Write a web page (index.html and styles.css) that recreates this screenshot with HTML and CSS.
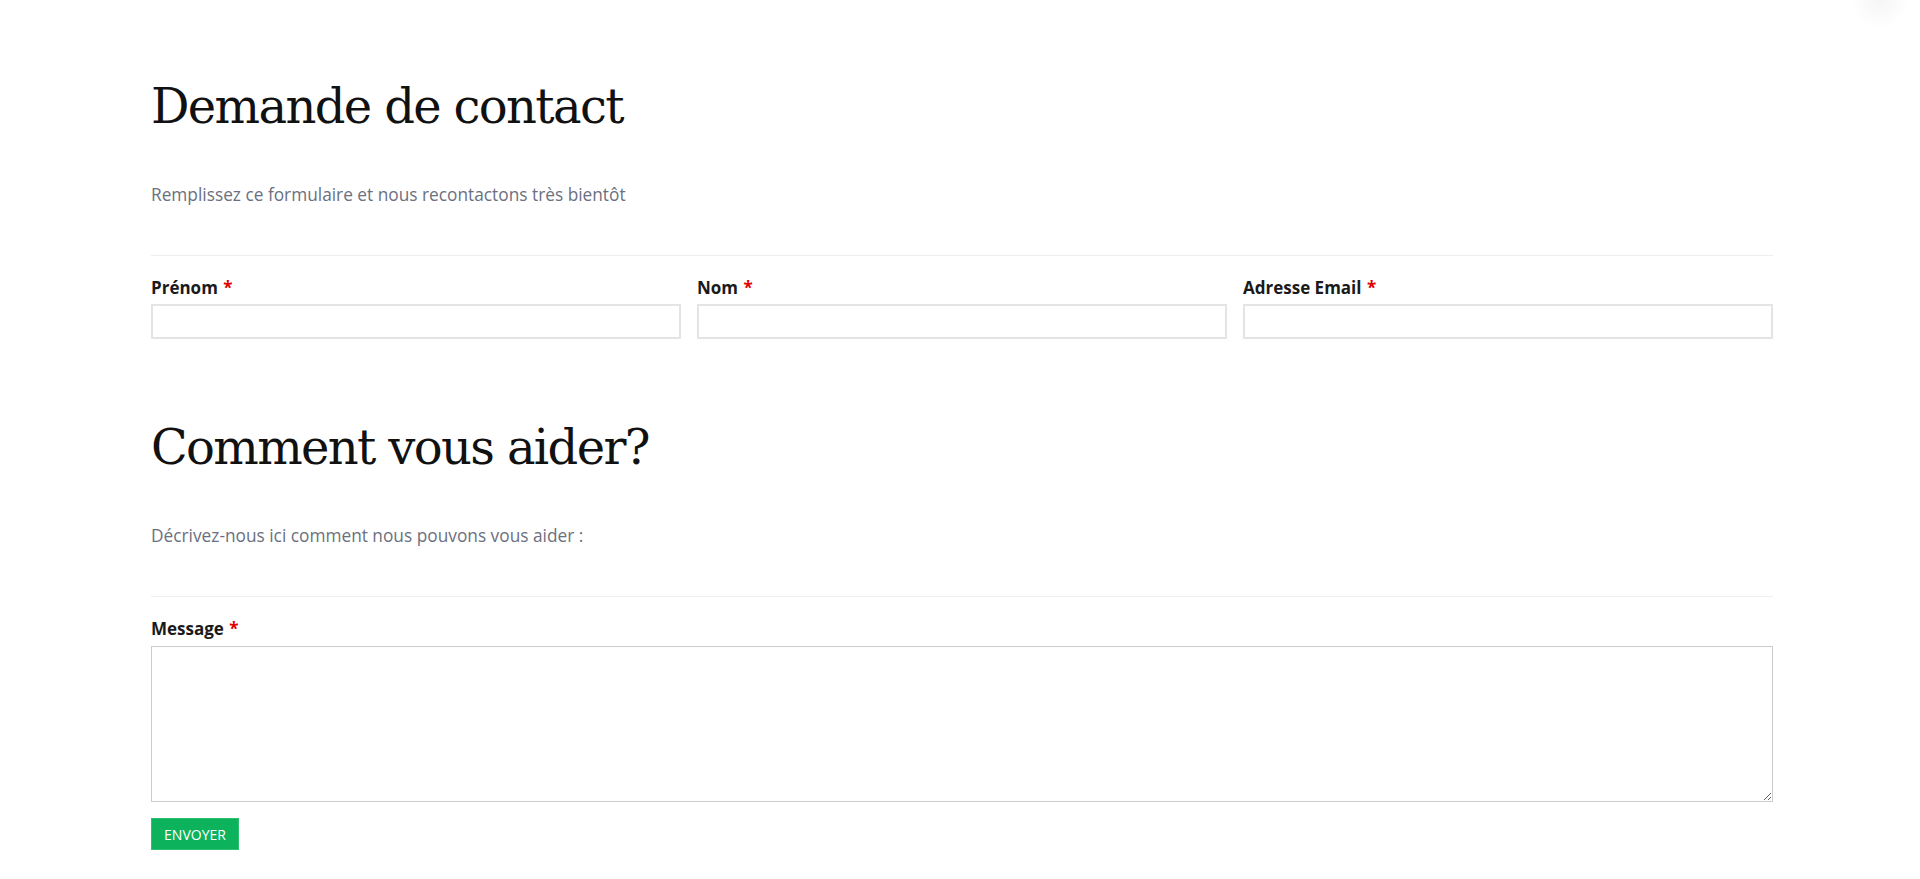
FILE: index.html
```html
<!DOCTYPE html>
<html lang="fr">
<head>
<meta charset="utf-8">
<title>Demande de contact</title>
<link rel="stylesheet" href="styles.css">
</head>
<body>
<div class="corner-glow"></div>
<form class="page">
  <section class="section">
    <h1 class="title">Demande de contact</h1>
    <p class="intro">Remplissez ce formulaire et nous recontactons très bientôt</p>
    <hr class="divider">
    <div class="row three">
      <div class="field">
        <label class="label">Prénom <span class="req">*</span></label>
        <input class="input" type="text">
      </div>
      <div class="field">
        <label class="label">Nom <span class="req">*</span></label>
        <input class="input" type="text">
      </div>
      <div class="field">
        <label class="label">Adresse Email <span class="req">*</span></label>
        <input class="input" type="email">
      </div>
    </div>
  </section>
  <section class="section">
    <h1 class="title">Comment vous aider?</h1>
    <p class="intro">Décrivez-nous ici comment nous pouvons vous aider :</p>
    <hr class="divider">
    <div class="field">
      <label class="label">Message <span class="req">*</span></label>
      <textarea class="textarea"></textarea>
    </div>
    <button class="submit" type="button">ENVOYER</button>
  </section>
</form>
</body>
</html>
```

FILE: styles.css
```css
* { box-sizing: border-box; }
html, body { margin: 0; padding: 0; background: #fff; }
body { font-family: "Open Sans", "Noto Sans", sans-serif; color: #1a1a1a; }

.corner-glow {
  position: absolute;
  top: -30px;
  right: 10px;
  width: 60px;
  height: 60px;
  border-radius: 50%;
  background: radial-gradient(circle, rgba(0,0,0,0.035) 0%, rgba(0,0,0,0) 70%);
}

.page {
  width: 1773px;
  padding-left: 151px;
}

.section { padding-top: 77px; }
.section + .section { padding-top: 79px; }

.title {
  margin: 0;
  font-family: "DejaVu Serif", "Liberation Serif", serif;
  font-weight: normal;
  font-size: 48px;
  line-height: 58px;
  color: #111;
  letter-spacing: -1.65px;
}

.intro {
  margin: 48px 0 0;
  font-size: 17.3px;
  line-height: 24px;
  color: #6b7080;
}

.divider {
  margin: 48px 0 0;
  border: 0;
  height: 1px;
  background: #eeeeee;
}

.row.three {
  display: grid;
  grid-template-columns: repeat(3, 1fr);
  gap: 16px;
}

.field { display: flex; flex-direction: column; }

.label {
  margin-top: 20px;
  font-weight: 700;
  font-size: 17px;
  line-height: 24px;
  color: #1a1a1a;
}

.req { color: #e00000; margin-left: 1px; }

.input {
  margin-top: 4px;
  height: 35px;
  border: 2px solid #e4e4e4;
  background: #fff;
  outline: none;
}

.textarea {
  margin-top: 5px;
  height: 156px;
  border: 1px solid #cccccc;
  background: #fff;
  resize: vertical;
  outline: none;
}

.submit {
  align-self: flex-start;
  margin-top: 16px;
  height: 32px;
  width: 88px;
  padding: 0;
  border: 1px solid #2cc070;
  background: #0db25d;
  color: #fff;
  font-family: "Open Sans", "Noto Sans", sans-serif;
  font-size: 14px;
  cursor: pointer;
}
```
